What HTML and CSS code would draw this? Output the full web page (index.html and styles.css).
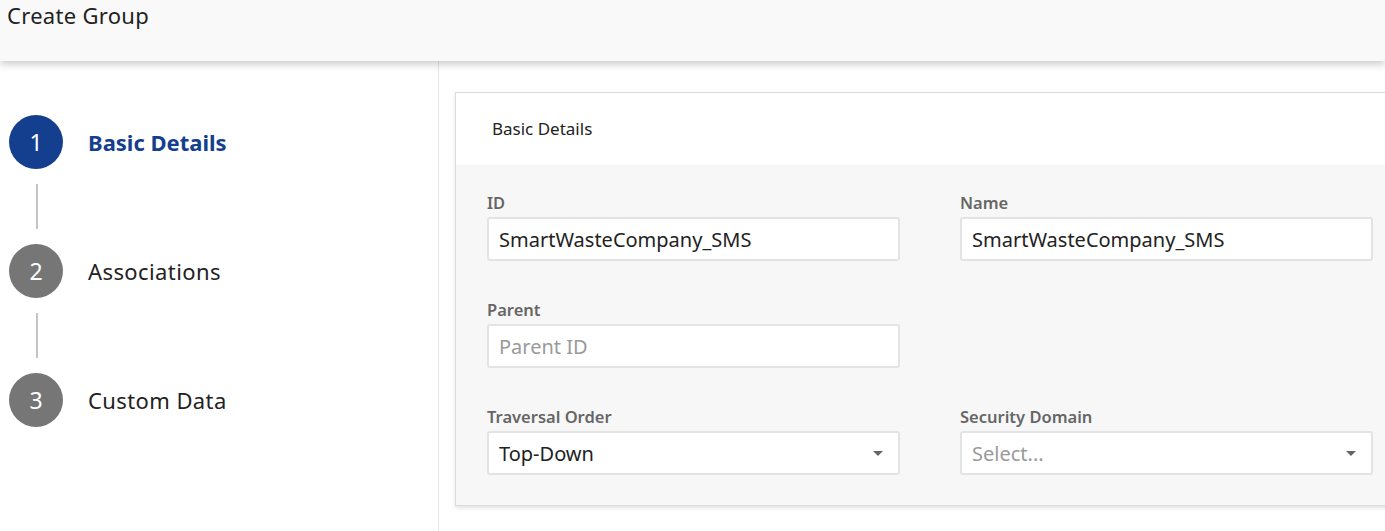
FILE: index.html
```html
<!DOCTYPE html>
<html>
<head>
<meta charset="utf-8">
<link rel="stylesheet" href="styles.css">
</head>
<body>
<header class="topbar"><h1 class="title">Create Group</h1></header>
<div class="main">
  <aside class="sidebar">
    <div class="step active"><span class="circle">1</span><span class="step-label">Basic Details</span></div>
    <div class="connector"><span class="line"></span></div>
    <div class="step"><span class="circle">2</span><span class="step-label">Associations</span></div>
    <div class="connector"><span class="line"></span></div>
    <div class="step"><span class="circle">3</span><span class="step-label">Custom Data</span></div>
  </aside>
  <section class="content">
    <div class="card">
      <div class="card-head">Basic Details</div>
      <div class="card-body">
        <div class="field">
          <div class="label">ID</div>
          <div class="input">SmartWasteCompany_SMS</div>
        </div>
        <div class="field">
          <div class="label">Name</div>
          <div class="input">SmartWasteCompany_SMS</div>
        </div>
        <div class="field">
          <div class="label">Parent</div>
          <div class="input placeholder">Parent ID</div>
        </div>
        <div class="field empty"></div>
        <div class="field">
          <div class="label">Traversal Order</div>
          <div class="input select">Top-Down<span class="caret"></span></div>
        </div>
        <div class="field">
          <div class="label">Security Domain</div>
          <div class="input select placeholder">Select...<span class="caret"></span></div>
        </div>
      </div>
    </div>
  </section>
</div>
</body>
</html>
```
FILE: styles.css
```css
html, body {
  margin: 0;
  padding: 0;
  height: 100%;
  overflow: hidden;
  background: #fff;
  font-family: "Noto Sans", "Open Sans", sans-serif;
  color: #222;
}
.topbar {
  height: 61px;
  background: #f9f9f9;
  box-shadow: 0 3px 8px rgba(0,0,0,0.22);
  position: relative;
  z-index: 2;
}
.title {
  margin: 0;
  padding: 0 0 0 7px;
  font-size: 22px;
  font-weight: 400;
  line-height: 30px;
  letter-spacing: 0.3px;
  color: #222;
}
.main {
  display: flex;
  height: calc(100% - 61px);
}
.sidebar {
  width: 439px;
  flex: none;
  border-right: 1px solid #e6e6e6;
  padding: 54px 0 0 9px;
  box-sizing: border-box;
}
.step {
  display: flex;
  align-items: center;
  height: 54px;
}
.circle {
  width: 54px;
  height: 54px;
  border-radius: 50%;
  background: #767676;
  color: #fff;
  font-size: 23px;
  display: flex;
  align-items: center;
  justify-content: center;
  flex: none;
}
.step.active .circle { background: #143e8e; }
.step-label {
  margin-left: 25px;
  font-size: 22px;
  color: #222;
  letter-spacing: 0.4px;
}
.step.active .step-label {
  color: #143e8e;
  font-weight: 700;
  letter-spacing: 0;
}
.connector {
  height: 75px;
  display: flex;
  align-items: center;
  padding-left: 27px;
}
.line {
  width: 2px;
  height: 45px;
  background: #c4c4c4;
}
.content {
  flex: 1;
  padding: 31px 0 0 16px;
  overflow: hidden;
}
.card {
  width: 960px;
  border: 1px solid #dcdcdc;
  box-shadow: 0 2px 4px rgba(0,0,0,0.12);
  background: #fff;
}
.card-head {
  height: 72px;
  line-height: 72px;
  padding-left: 36px;
  font-size: 17px;
  color: #222;
}
.card-body {
  background: #f7f7f7;
  padding: 27px 0 30px 31px;
  display: grid;
  grid-template-columns: 413px 413px;
  column-gap: 60px;
  row-gap: 38px;
}
.field { min-height: 69px; }
.label {
  font-size: 16.5px;
  font-weight: 600;
  color: #666;
  line-height: 22px;
  margin-bottom: 3px;
}
.input {
  height: 44px;
  box-sizing: border-box;
  border: 2px solid #e3e3e3;
  border-radius: 3px;
  background: #fff;
  padding: 0 10px;
  display: flex;
  align-items: center;
  font-size: 20px;
  color: #222;
  position: relative;
}
.input.placeholder { color: #9a9a9a; }
.select { padding-right: 36px; }
.caret {
  position: absolute;
  right: 15px;
  top: 18px;
  width: 0;
  height: 0;
  border-left: 5.5px solid transparent;
  border-right: 5.5px solid transparent;
  border-top: 5px solid #666;
}
```
